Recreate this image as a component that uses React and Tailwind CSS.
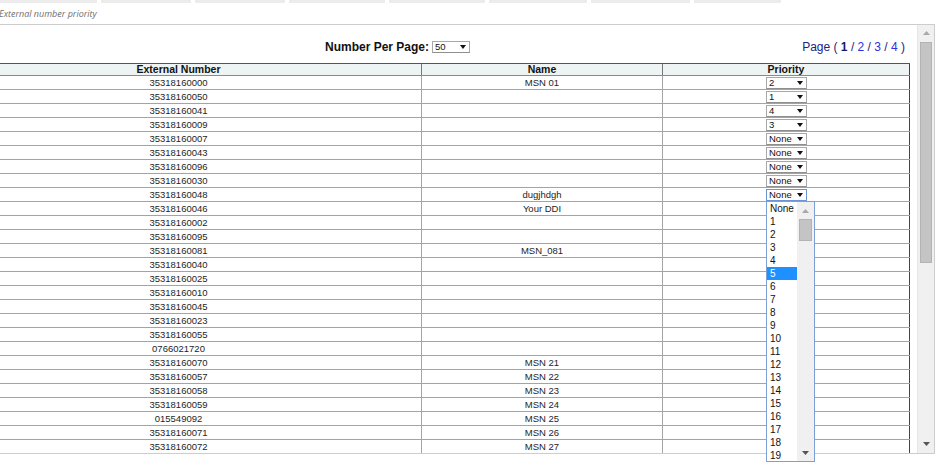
import React from 'react';

const rows = [
  ['35318160000', 'MSN 01', '2'],
  ['35318160050', '', '1'],
  ['35318160041', '', '4'],
  ['35318160009', '', '3'],
  ['35318160007', '', 'None'],
  ['35318160043', '', 'None'],
  ['35318160096', '', 'None'],
  ['35318160030', '', 'None'],
  ['35318160048', 'dugjhdgh', 'None', true],
  ['35318160046', 'Your DDI', ''],
  ['35318160002', '', ''],
  ['35318160095', '', ''],
  ['35318160081', 'MSN_081', ''],
  ['35318160040', '', ''],
  ['35318160025', '', ''],
  ['35318160010', '', ''],
  ['35318160045', '', ''],
  ['35318160023', '', ''],
  ['35318160055', '', ''],
  ['0766021720', '', ''],
  ['35318160070', 'MSN 21', ''],
  ['35318160057', 'MSN 22', ''],
  ['35318160058', 'MSN 23', ''],
  ['35318160059', 'MSN 24', ''],
  ['015549092', 'MSN 25', ''],
  ['35318160071', 'MSN 26', ''],
  ['35318160072', 'MSN 27', ''],
];

const tabs = [97, 90, 90, 96, 96, 98, 99, 87];
const options = ['None', ...Array.from({ length: 19 }, (_, i) => String(i + 1))];

const Arrow = ({ color = '#111' }) => (
  <svg width="6" height="4" viewBox="0 0 6 4" className="shrink-0">
    <polygon points="0,0 6,0 3,4" fill={color} />
  </svg>
);

const FakeSelect = ({ value, focused, width = 'w-[41px]' }) => (
  <div
    className={`flex items-center justify-between h-[12px] ${width} bg-white border pl-[2px] pr-[3px] text-[9.5px] leading-[10px] text-[#111] ${
      focused ? 'border-[#6b96d6]' : 'border-[#a8a8a8] border-b-[#8f8f8f]'
    }`}
  >
    <span>{value}</span>
    <Arrow />
  </div>
);

const ScrollArrow = ({ up }) => (
  <svg width="7" height="4" viewBox="0 0 7 4">
    <polygon points={up ? '0,4 7,4 3.5,0' : '0,0 7,0 3.5,4'} fill={up ? '#a8a8a8' : '#555'} />
  </svg>
);

export default function App() {
  return (
    <div className="relative w-[946px] h-[474px] bg-white overflow-hidden font-['Liberation_Sans',Arial,sans-serif]">
      {/* tab strip */}
      <div className="flex gap-[4px] h-[3px]">
        {tabs.map((w, i) => (
          <div key={i} className="h-[3px] bg-[#ececec]" style={{ width: w }} />
        ))}
      </div>

      <div className="h-[21px] flex items-center -ml-[1px] font-['Open_Sans',sans-serif] italic text-[9px] text-[#6e6e6e]">
        External number priority
      </div>

      {/* content box */}
      <div className="flex w-[935px] h-[430px] border-t border-r border-b border-[#cdcdcd]">
        <div className="flex-1 overflow-hidden">
          <div className="flex items-center h-[38px] pt-[15px] pb-[9px] pl-[325px] pr-[12px]">
            <span className="font-bold text-[12px] leading-[14px] text-[#111]">Number Per Page:</span>
            <div className="ml-[3px]">
              <FakeSelect value="50" width="w-[38px]" />
            </div>
            <div className="ml-auto text-[12px] leading-[14px] text-[#22227a]">
              Page ( <b className="text-[#1a1a6a]">1</b> / <span className="text-[#2f2fe0]">2</span> /{' '}
              <span className="text-[#2f2fe0]">3</span> / <span className="text-[#2f2fe0]">4</span> )
            </div>
          </div>

          <div className="-ml-[64px] w-[974px]">
            <div className="grid grid-cols-[486px_241px_247px] h-[13px] border-t border-b border-t-[#555] border-b-[#8a8a8a] bg-[#eef3f3] text-[10.5px] leading-[11px] font-bold text-[#121212]">
              <div className="flex items-center justify-center border-r border-[#777]">External Number</div>
              <div className="flex items-center justify-center border-r border-[#777]">Name</div>
              <div className="flex items-center justify-center border-r border-[#444]">Priority</div>
            </div>
            {rows.map(([num, name, pr, focused], i) => (
              <div
                key={i}
                className="grid grid-cols-[486px_241px_247px] h-[14px] border-b border-[#a4a4a4] text-[9.5px] leading-[13px] text-[#1e1e1e]"
              >
                <div className="flex items-center justify-center border-r border-[#a4a4a4]">{num}</div>
                <div className="flex items-center justify-center border-r border-[#a4a4a4]">{name}</div>
                <div className="flex items-center justify-center border-r border-[#444] pl-[1px]">
                  {pr && <FakeSelect value={pr} focused={focused} />}
                </div>
              </div>
            ))}
          </div>
        </div>

        {/* page scrollbar */}
        <div className="w-[17px] flex flex-col bg-[#f0f0f0] border-l border-[#e6e6e6]">
          <div className="h-[16px] flex items-center justify-center">
            <ScrollArrow up />
          </div>
          <div className="mx-[2px] mt-[1px] h-[221px] bg-[#c4c4c4] border border-[#b3b3b3]" />
          <div className="flex-1" />
          <div className="h-[18px] flex items-center justify-center">
            <ScrollArrow />
          </div>
        </div>
      </div>

      {/* open dropdown list */}
      <div className="absolute left-[766px] top-[201px] w-[49px] h-[261px] flex bg-white border border-[#7b9fd6]">
        <div className="flex-1 flex flex-col">
          {options.map((o) => (
            <div
              key={o}
              className={`h-[13px] shrink-0 pl-[3px] text-[10px] leading-[13px] ${
                o === '5' ? 'bg-[#1e90ff] text-white' : 'text-[#111]'
              }`}
            >
              {o}
            </div>
          ))}
        </div>
        <div className="w-[17px] flex flex-col bg-[#f0f0f0]">
          <div className="h-[17px] flex items-center justify-center">
            <ScrollArrow up />
          </div>
          <div className="mx-[2px] h-[22px] bg-[#c4c4c4] border border-[#b3b3b3]" />
          <div className="flex-1" />
          <div className="h-[16px] flex items-center justify-center">
            <ScrollArrow />
          </div>
        </div>
      </div>
    </div>
  );
}
